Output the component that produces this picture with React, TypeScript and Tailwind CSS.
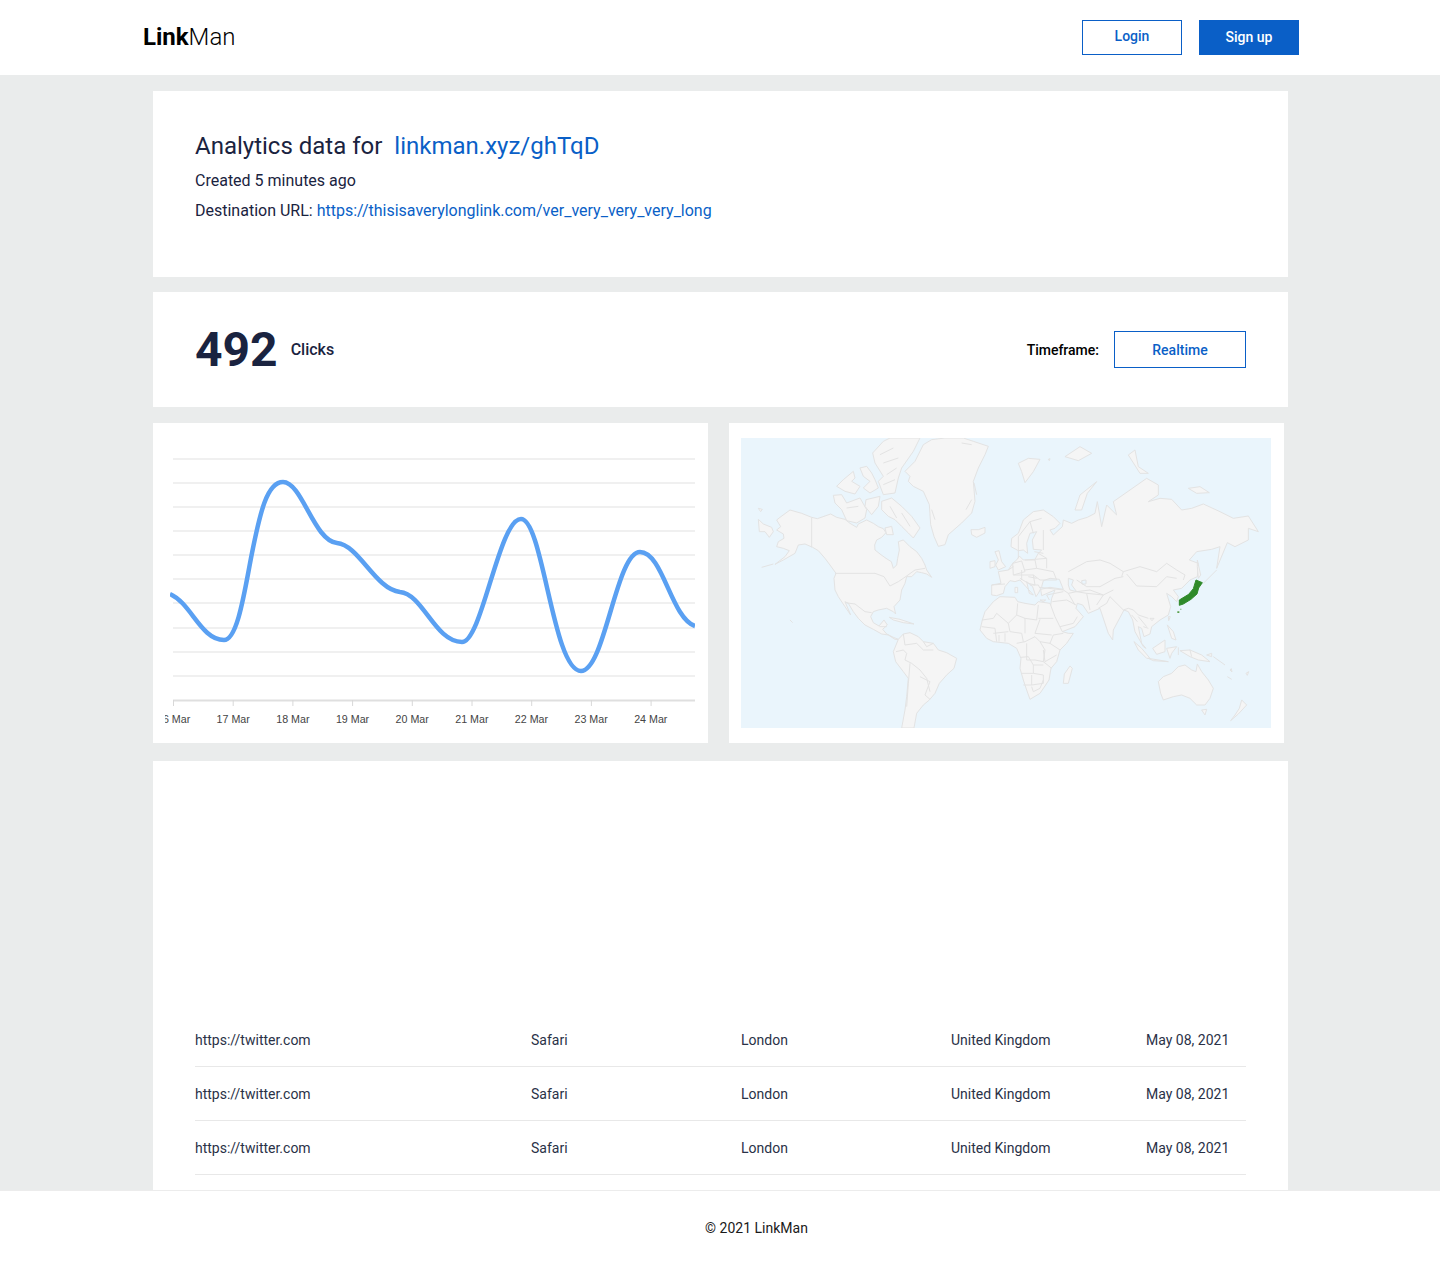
const F = "font-['Roboto',sans-serif]";
const OCEAN = "#eaf5fc";

function P({ d, fill, stroke }: { d: string; fill?: string; stroke?: string }) {
  return <path d={d} fill={fill} stroke={stroke} vectorEffect="non-scaling-stroke" />;
}

function Crop({ x, y, children }: { x: number; y: number; children: React.ReactNode }) {
  return (
    <g transform={`translate(${x - 741},${y - 438}) scale(0.33333)`} fill="#f5f5f5" stroke="#e3e3e3" strokeWidth="1" strokeLinejoin="round">
      {children}
    </g>
  );
}

function WorldMap() {
  return (
    <svg viewBox="0 0 530 290" className="block w-[530px] h-[290px]">
      <rect width="530" height="290" fill={OCEAN} />
      {/* Americas */}
      <Crop x={730} y={430}>
        <P d="M140 270L150 262L180 240L215 250L245 262L262 266L285 258L302 252L320 262L345 268L360 280L380 292L385 282L410 270L430 280L445 290L460 296L468 308L455 322L440 330L434 345L435 360L450 372L468 385L484 395L490 415L500 405L503 385L508 360L505 335L520 330L540 350L560 365L575 385L585 405L590 420L605 442L590 432L575 428L560 425L545 440L530 440L525 460L515 480L510 510L492 530L497 552L490 545L470 535L445 540L430 545L422 560L430 578L447 588L462 570L472 585L458 598L470 612L490 622L505 628L495 628L475 615L455 612L430 598L405 585L385 565L370 545L355 520L345 515L362 555L345 530L325 500L315 480L312 445L318 430L300 405L285 385L265 362L248 352L225 342L205 345L195 370L160 390L135 403L165 380L178 362L160 355L140 350L145 335L162 325L160 312L140 300L152 290Z" />
        <P d="M505 628L520 612L540 608L565 620L580 635L610 640L625 660L650 668L680 685L672 715L650 735L628 760L615 790L598 810L580 825L560 850L552 894L515 894L525 840L530 800L535 745L520 725L497 695L490 665Z" />
        <P d="M85 268L100 282L125 292L130 305L118 322L105 305L88 305Z" />
        <P d="M85 235L97 238L92 245Z" />
        <P d="M478 562L510 568L552 582L520 578L490 570Z" />
        <P fill="none" d="M245 262L245 352M315 430L435 430L462 440L480 468L505 455L520 445L555 420L585 415M345 518L375 522L405 545L425 548M448 590L470 590M498 665L520 660L530 670L525 690L545 700L570 720L590 745L600 785M520 612L525 645L560 640L580 660L610 660M540 700L535 760L530 830M570 740L600 755L585 795L600 808M580 635L590 650L610 640M95 412L130 402M180 570L188 578" />
      </Crop>
      {/* Arctic Canada, Greenland */}
      <Crop x={830} y={438}>
        <P d="M10 172L35 170L50 195L90 180L110 215L105 240L80 255L50 248L35 215L15 195Z" />
        <P d="M20 145L40 125L70 100L75 120L65 130L90 145L75 168L45 160Z" />
        <P d="M90 90L110 85L125 105L135 125L145 150L120 165L100 150L120 130L100 115Z" />
        <P d="M128 45L160 10L180 0L270 0L250 40L215 90L205 120L195 165L160 170L145 130L160 115L135 75Z" />
        <P d="M155 190L185 180L215 205L245 235L270 270L250 300L235 285L215 265L195 245L175 235L155 215Z" />
        <P d="M108 185L150 175L145 205L125 230L105 205Z" />
        <P d="M165 270L185 265L190 290L170 290Z" />
        <P d="M225 100L255 70L280 20L305 5L345 0L400 0L430 10L475 25L465 50L445 90L430 130L435 190L425 225L395 255L355 290L345 320L325 325L312 295L302 260L298 200L280 160L250 145L235 130L240 115Z" />
        <P d="M423 275L445 275L465 268L465 285L440 298L425 290Z" />
        <P fill="none" d="M150 50L190 30M160 75L205 60M170 110L200 90M160 140L195 125M50 210L85 205M180 205L200 240M215 225L240 265M305 215L315 245M408 215L425 185M432 135L440 170M395 15L425 20" />
      </Crop>
      {/* Eurasia */}
      <Crop x={1000} y={430}>
        <P d="M-25 465L3 460L-5 425L25 420L38 400L50 390L58 378L70 390L105 388L115 370L125 360L100 358L97 330L110 305L90 310L80 340L83 370L70 360L55 362L33 350L35 325L55 310L70 270L100 245L130 240L160 260L180 280L165 295L150 300L160 315L187 290L190 270L215 280L235 270L262 262L285 250L292 215L305 290L320 225L350 255L340 215L390 180L440 145L475 165L475 195L445 215L480 205L515 208L545 240L575 235L610 222L660 245L700 265L745 258L775 305L745 295L745 330L705 350L682 338L650 415L660 350L635 358L590 365L568 390L595 400L592 440L570 450L545 475L520 480L535 500L530 515L515 500L500 490L512 530L505 555L480 570L455 590L450 612L432 620L425 595L415 590L425 640L438 655L430 650L405 605L398 570L385 545L372 540L340 600L338 630L325 610L300 535L265 550L248 525L232 520L228 535L250 560L225 590L187 605L170 585L150 540L155 505L165 480L125 497L122 478L150 472L190 478L178 448L150 445L130 452L125 470L115 490L108 500L98 470L80 455L88 490L100 495L78 470L60 450L45 455L30 452L15 470L10 490L-10 497L-25 495Z" />
        <P fill={OCEAN} d="M205 445L220 450L215 465L230 485L210 480L205 465Z" />
        <P fill={OCEAN} d="M245 452L258 450L258 462L246 462Z" />
        <P d="M55 100L85 85L120 88L100 125L75 158L65 125Z" />
        <P d="M195 80L240 50L275 70L235 92Z" />
        <P d="M385 75L405 60L415 110L445 130L420 130Z" />
        <P d="M565 175L600 170L628 188L590 190Z" />
        <P d="M225 240L240 195L290 155L262 190L245 240Z" />
        <P d="M145 88L150 86L148 92Z" />
        <P fill="none" d="M205 425L260 395L300 390L330 400L370 425L365 440M370 425L420 410L470 425L500 400L530 420L555 435L550 450M380 432L410 468L470 470L500 440L530 445M230 450L260 470L300 470L345 445L370 440M230 485L270 480L310 495L340 480M205 490L230 485L260 490L270 540M190 480L205 490L225 525M260 490L310 495L290 525M295 535L320 520L330 500L370 540L385 535M385 535L400 540L415 555L445 565M157 515L200 510L228 525M120 472L190 480M140 495L190 485M180 590L220 580L232 560M395 555L412 575M415 560L440 590M430 590L445 595M148 510L140 495" />
      </Crop>
      {/* Europe */}
      <Crop x={975} y={500}>
        <P d="M60 155L72 152L80 185L92 200L70 210L62 195L70 180Z" />
        <P d="M45 185L60 182L60 200L45 205Z" />
        <P d="M120 262L128 262L128 278L120 278Z" />
        <P d="M195 300L212 300L205 305Z" />
        <P fill="none" d="M113 190L115 225M113 190L140 183L150 215L115 225M150 180L180 180L185 205L150 210M50 255L90 252M185 205L235 215L245 240L195 240L175 225M180 178L215 175L215 205M190 160L215 175M205 90L205 150M130 175L130 110L165 65L200 55M175 100L165 65M115 225L150 225L175 225L180 255L160 250L135 235M165 255L190 255L195 265M140 210L140 240M160 230L185 235M100 210L115 200M178 155L205 160" />
      </Crop>
      {/* Africa */}
      <Crop x={975} y={600}>
        <P d="M15 90L22 60L30 35L55 5L75 -10L120 -8L128 5L150 10L180 15L190 5L225 10L240 50L262 95L280 100L295 100L275 130L255 150L245 185L228 205L222 240L212 255L195 280L165 298L155 270L145 240L135 205L138 175L125 145L100 130L55 125L35 115Z" />
        <P d="M265 250L268 222L285 198L292 205L280 250Z" />
        <P fill="none" d="M22 60L55 55L65 40L100 70L125 45L128 10M125 45L150 55L150 100M150 55L185 60L190 15M190 55L235 55M180 100L195 58M180 100L230 105M100 70L105 95L140 100L145 125M60 85L65 125M55 100L100 95M72 105L72 125M90 100L90 125M125 130L150 125L180 110L195 125L225 130L235 105L265 100M225 130L255 150M155 130L155 180L180 180L205 185L210 150L195 125M205 150L210 185L245 165M138 172L160 170L175 195L205 195M138 220L175 220L175 195M205 185L230 205M175 220L205 225L205 250L170 255L170 225M145 255L170 255M170 260L175 275L195 265L205 240M20 80L60 85" />
      </Crop>
      {/* Asia-Pacific */}
      <Crop x={1110} y={560}>
        <P d="M145 365L160 350L185 340L205 320L225 315L245 330L258 335L262 312L275 335L295 360L310 385L300 415L285 435L260 435L240 415L215 405L190 410L160 420L152 400Z" />
        <P d="M275 450L290 448L285 465Z" />
        <P d="M362 482L385 462L410 435L395 420L388 445L375 465Z" />
        <P d="M72 245L95 265L120 295L110 295L85 270Z" />
        <P d="M115 295L175 305L130 302Z" />
        <P d="M128 265L165 240L165 275L140 283Z" />
        <P d="M170 265L200 260L185 280L180 295Z" />
        <P d="M210 272L240 270L275 285L300 305L265 300L240 290Z" />
        <P d="M172 195L190 215L198 240L185 235Z" />
        <P d="M175 170L181 170L176 182Z" />
        <P d="M262 0L272 45L265 55L262 20Z" />
        <P d="M290 285L305 280L305 290Z" />
        <P d="M120 175L132 175L126 182Z" />
        <P d="M360 330L364 326L366 336Z" />
        <P d="M408 340L416 335L412 346Z" />
        <P fill="none" d="M280 70L320 30M310 290L345 315M352 350L365 358M205 262L205 285M240 270L245 290" />
        <path d="M258 60L277 68L266 84L261 102L243 118L220 132L208 136L208 120L236 103L250 86Z" fill="#2f8a2a" stroke="#2f8a2a" strokeWidth="3" />
        <path d="M202 154h6v5h-6zM211 146h3v3h-3z" fill="#5aa04c" stroke="none" />
      </Crop>
    </svg>
  );
}

function Chart() {
  const grid = [36, 60, 84, 108, 132, 156, 180, 205, 229, 253];
  const labels = ["16 Mar", "17 Mar", "18 Mar", "19 Mar", "20 Mar", "21 Mar", "22 Mar", "23 Mar", "24 Mar"];
  return (
    <svg viewBox="0 0 555 320" className="block w-[555px] h-[320px]">
      <defs>
        <clipPath id="plot"><rect x="17" y="0" width="525" height="320" /></clipPath>
        <clipPath id="axis"><rect x="12" y="280" width="530" height="40" /></clipPath>
      </defs>
      {grid.map((y) => (
        <line key={y} x1="20" x2="542" y1={y} y2={y} stroke="#ebebeb" strokeWidth="1.4" />
      ))}
      <line x1="20" x2="542" y1="277.5" y2="277.5" stroke="#dfdfdf" strokeWidth="2" />
      {labels.map((_, i) => (
        <line key={i} x1={20.5 + i * 59.7} x2={20.5 + i * 59.7} y1="277" y2="283" stroke="#d8d8d8" />
      ))}
      <g clipPath="url(#axis)">
        {labels.map((l, i) => (
          <text key={l} x={20.6 + i * 59.65} y="300" textAnchor="middle" fontSize="10.7" fill="#444" fontFamily="'Liberation Sans', sans-serif">{l}</text>
        ))}
      </g>
      <path
        clipPath="url(#plot)"
        d="M17 171C38 180 48 217 71 217C85 217 92 165 99 130C107 90 114 59 130 59C149 59 161 118 184 120C206 122 222 166 247 169C270 171 282 219 309 219C329 219 346 96 368 96C390 96 400 248 428 248C452 248 463 129 487 129C510 129 518 195 542 203"
        fill="none"
        stroke="#5aa0f2"
        strokeWidth="4.5"
      />
    </svg>
  );
}

const rows = [0, 1, 2];

export default function App() {
  return (
    <div className={`${F} min-h-[1266px] bg-[#eaecec] text-[#1a2340] flex flex-col`}>
      <header className="h-[75px] bg-white flex items-center justify-between pl-[143px] pr-[141px]">
        <div className="text-[24px] leading-none text-black pb-[2px]">
          <span className="font-bold">Link</span><span className="font-light">Man</span>
        </div>
        <div className="flex gap-[17px]">
          <button className="w-[100px] h-[35px] border border-[#0a5fc7] text-[#0a5fc7] bg-white text-sm font-medium pb-[3px]">Login</button>
          <button className="w-[100px] h-[35px] bg-[#0a5fc7] text-white text-sm font-medium pb-[1px]">Sign up</button>
        </div>
      </header>

      <main className="pl-[153px] pr-[152px] pt-[16px] flex flex-col">
        <section className="h-[186px] bg-white pl-[42px] pr-[42px] pt-[39px]">
          <h1 className="text-[24px] leading-[32px] flex gap-[12px]">
            <span>Analytics data for</span>
            <a className="text-[#0a5fc7]">linkman.xyz/ghTqD</a>
          </h1>
          <p className="mt-[7px] text-[16px] leading-[24px]">Created 5 minutes ago</p>
          <p className="mt-[6px] text-[16px] leading-[24px]">
            Destination URL: <a className="text-[#0a5fc7]">https://thisisaverylonglink.com/ver_very_very_very_long</a>
          </p>
        </section>

        <section className="mt-[15px] h-[115px] bg-white px-[42px] flex items-center justify-between">
          <div className="flex items-center gap-[13px]">
            <span className="text-[48px] leading-none font-bold">492</span>
            <span className="text-[16px] font-medium">Clicks</span>
          </div>
          <div className="flex items-center gap-[15px]">
            <span className="text-sm font-medium text-black">Timeframe:</span>
            <div className="w-[132px] h-[37px] border border-[#0a5fc7] text-[#0a5fc7] text-sm font-medium flex items-center justify-center">Realtime</div>
          </div>
        </section>

        <div className="mt-[16px] flex gap-[21px]">
          <section className="w-[555px] h-[320px] bg-white">
            <Chart />
          </section>
          <section className="w-[555px] h-[320px] bg-white pl-[12px] pt-[15px]">
            <WorldMap />
          </section>
        </div>

        <section className="mt-[18px] h-[429px] bg-white pl-[42px] pr-[42px] pt-[252px]">
          {rows.map((r) => (
            <div key={r} className="h-[54px] border-b border-[#e8e8e8] grid grid-cols-[336px_210px_210px_195px_1fr] items-center text-sm text-[#2a3147]">
              <span>https://twitter.com</span>
              <span>Safari</span>
              <span>London</span>
              <span>United Kingdom</span>
              <span>May 08, 2021</span>
            </div>
          ))}
        </section>
      </main>

      <footer className="h-[76px] bg-white border-t border-[#ececec] flex items-center justify-center pl-[73px] pb-[2px] text-sm text-[#1a1a1a]">
        © 2021 LinkMan
      </footer>
    </div>
  );
}
